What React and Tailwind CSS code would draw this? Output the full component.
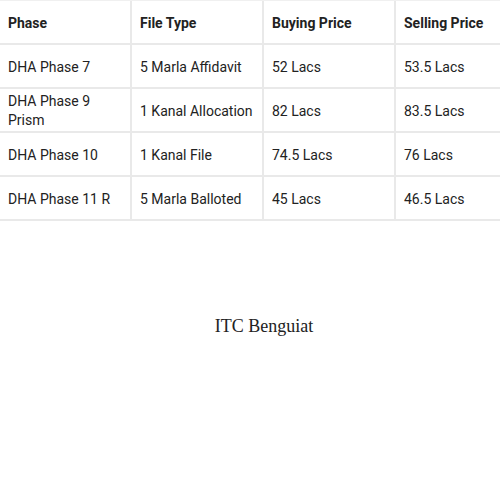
const rows = [
  ["DHA Phase 7", "5 Marla Affidavit", "52 Lacs", "53.5 Lacs"],
  ["DHA Phase 9 Prism", "1 Kanal Allocation", "82 Lacs", "83.5 Lacs"],
  ["DHA Phase 10", "1 Kanal File", "74.5 Lacs", "76 Lacs"],
  ["DHA Phase 11 R", "5 Marla Balloted", "45 Lacs", "46.5 Lacs"],
];

const headers = ["Phase", "File Type", "Buying Price", "Selling Price"];

const Cell = ({ children, last, bold }) => (
  <div
    className={`flex items-center pl-2 pr-1 pt-[2px] text-[14px] leading-[19px] text-[#222] ${
      last ? "" : "border-r-2 border-[#e9e9e9]"
    } ${bold ? "font-bold" : ""}`}
  >
    {children}
  </div>
);

const App = () => {
  return (
    <div className="w-[500px] h-[500px] bg-white font-['Roboto',sans-serif] flex flex-col">
      {/* Price table */}
      <div className="border-t border-[#f0f0f0]">
        <div className="grid grid-cols-[132px_132px_132px_104px] h-[44px] border-b-2 border-[#e9e9e9]">
          {headers.map((h, i) => (
            <Cell key={h} last={i === 3} bold>
              {h}
            </Cell>
          ))}
        </div>
        {rows.map((r) => (
          <div
            key={r[0]}
            className="grid grid-cols-[132px_132px_132px_104px] h-[44px] border-b-2 border-[#e9e9e9]"
          >
            {r.map((c, i) => (
              <Cell key={i} last={i === 3}>
                {c}
              </Cell>
            ))}
          </div>
        ))}
      </div>

      {/* Font label */}
      <div className="flex justify-center pl-[28px] mt-[92px]">
        <p className="font-['Liberation_Serif',serif] text-[18px] text-[#222]">ITC Benguiat</p>
      </div>
    </div>
  );
};

export default App;
